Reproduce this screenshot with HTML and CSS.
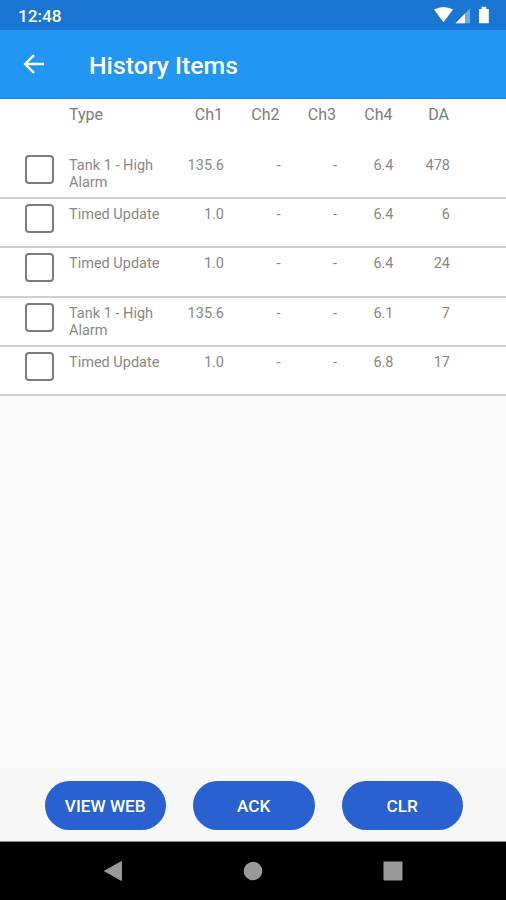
FILE: index.html
```html
<!DOCTYPE html>
<html lang="en">
<head>
<meta charset="utf-8">
<title>History Items</title>
<link rel="stylesheet" href="styles.css">
</head>
<body>
<div class="status">
  <span class="time">12:48</span>
  <svg class="status-icons" width="60" height="20" viewBox="0 0 60 20">
    <path fill="#fff" d="M1 4.600Q10.500 -.8 20 4.600L10.500 17.200Z"/>
    <path fill="#fff" fill-opacity=".38" d="M37 3.500V18.200H22.500Z"/>
    <path fill="#fff" d="M32 8.600V18.200H22.500Z"/>
    <path fill="#fff" d="M46 4h2.600V1.800h4.600V4h2.600v14.200H46z"/>
  </svg>
</div>
<header class="appbar">
  <svg class="back" width="22" height="20" viewBox="0 0 22 20" fill="none" stroke="#fff" stroke-width="2.400"><path d="M21 10H2.200M11 1.100L2.100 10l8.900 8.900"/></svg>
  <h1>History Items</h1>
</header>
<main>
  <div class="head cols"><span></span><span class="type">Type</span><span>Ch1</span><span>Ch2</span><span>Ch3</span><span>Ch4</span><span>DA</span></div>
  <div class="row cols"><i class="check"></i><span class="type">Tank 1 - High Alarm</span><span>135.6</span><span>-</span><span>-</span><span>6.4</span><span>478</span></div>
  <div class="row cols"><i class="check"></i><span class="type">Timed Update</span><span>1.0</span><span>-</span><span>-</span><span>6.4</span><span>6</span></div>
  <div class="row cols"><i class="check"></i><span class="type">Timed Update</span><span>1.0</span><span>-</span><span>-</span><span>6.4</span><span>24</span></div>
  <div class="row cols"><i class="check"></i><span class="type">Tank 1 - High Alarm</span><span>135.6</span><span>-</span><span>-</span><span>6.1</span><span>7</span></div>
  <div class="row cols"><i class="check"></i><span class="type">Timed Update</span><span>1.0</span><span>-</span><span>-</span><span>6.8</span><span>17</span></div>
</main>
<footer class="actions">
  <button>VIEW WEB</button><button>ACK</button><button>CLR</button>
</footer>
<nav class="navbar">
  <svg width="20" height="22" viewBox="0 0 20 22"><path fill="#999" stroke="#999" stroke-linejoin="round" d="M1.500 11L18.500 1.500v19z"/></svg>
  <svg width="20" height="20" viewBox="0 0 20 20"><circle cx="10" cy="10" r="9.300" fill="#999"/></svg>
  <svg width="20" height="20" viewBox="0 0 20 20"><rect x=".5" y=".5" width="19" height="19" rx="1" fill="#999"/></svg>
</nav>
</body>
</html>
```
FILE: styles.css
```css
* { box-sizing: border-box; }
body {
  margin: 0;
  height: 900px;
  display: flex;
  flex-direction: column;
  overflow: hidden;
  background: #fafafa;
  font-family: Roboto, sans-serif;
}
.status {
  height: 30px;
  padding: 0 13px 0 18px;
  display: flex;
  align-items: center;
  justify-content: space-between;
  background: #1976d2;
  color: #fff;
}
.time { font-size: 17.2px; font-weight: 500; line-height: 20px; padding-top: 2px; }
.status-icons { display: block; }
.appbar {
  height: 69px;
  padding-left: 23px;
  display: flex;
  align-items: center;
  background: #2196f3;
  border-bottom: 1px solid #1e88f0;
  color: #fff;
}
.back { margin-right: 44px; }
h1 { margin: 4px 0 0; font-size: 24.8px; font-weight: 500; line-height: 30px; }
main { background: #fff; }
.cols {
  display: grid;
  grid-template-columns: 44px 98px 57px repeat(4, 56.5px);
  padding-left: 25px;
  text-align: right;
}
.cols .type { text-align: left; }
.head {
  height: 51px;
  padding-top: 6px;
  font-size: 16px;
  line-height: 20px;
  color: #7c7c7c;
}
.head span:not(.type) { padding-right: 1px; }
.row {
  height: 49.2px;
  padding-top: 7px;
  border-bottom: 2px solid #cfcfcf;
  font-size: 14.5px;
  line-height: 17.2px;
  color: #888;
}
.check {
  width: 29px;
  height: 29px;
  margin-top: -2px;
  border: 2px solid #7c7c7c;
  border-radius: 4px;
}
.actions {
  height: 74px;
  margin-top: auto;
  padding: 13.5px 43px 0 44.5px;
  display: flex;
  justify-content: space-between;
  align-items: flex-start;
  background: #f7f7f7;
}
button {
  width: 121.5px;
  height: 49px;
  padding: 2px 0 0;
  border: 0;
  border-radius: 25px;
  background: #2962d0;
  color: #fff;
  font: 500 17.2px Roboto, sans-serif;
}
.navbar {
  height: 59px;
  padding: 0 103px;
  display: flex;
  justify-content: space-between;
  align-items: center;
  background: #000;
  border-top: 1px solid #888;
}
```
